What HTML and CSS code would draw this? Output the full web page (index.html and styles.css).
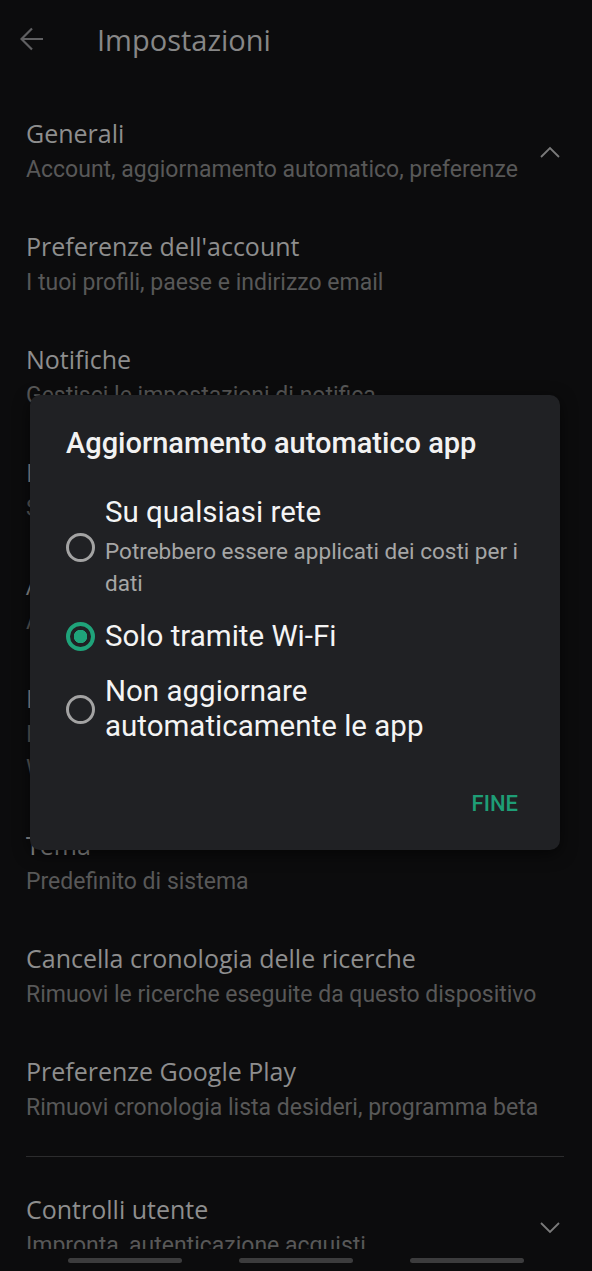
FILE: index.html
```html
<!DOCTYPE html>
<html lang="it">
<head>
<meta charset="utf-8">
<title>Impostazioni</title>
<link rel="stylesheet" href="styles.css">
</head>
<body>
<div class="screen">
  <header class="appbar">
    <svg class="back" width="24" height="24" viewBox="0 0 24 24"><path d="M23 12H2M12 1.5L1.5 12 12 22.5" fill="none" stroke="currentColor" stroke-width="2.2"/></svg>
    <h1 class="appbar-title">Impostazioni</h1>
  </header>
  <main class="content">
    <div class="item item-expand">
      <div class="item-text">
        <div class="item-title">Generali</div>
        <div class="item-sub">Account, aggiornamento automatico, preferenze</div>
      </div>
      <svg class="chev" width="20" height="12" viewBox="0 0 20 12"><polyline points="1,11 10,2 19,11" fill="none" stroke="currentColor" stroke-width="1.8"/></svg>
    </div>
    <div class="item">
      <div class="item-title">Preferenze dell'account</div>
      <div class="item-sub">I tuoi profili, paese e indirizzo email</div>
    </div>
    <div class="item">
      <div class="item-title">Notifiche</div>
      <div class="item-sub">Gestisci le impostazioni di notifica</div>
    </div>
    <div class="item">
      <div class="item-title">Impostazioni di download app</div>
      <div class="item-sub">Seleziona la tua preferenza</div>
    </div>
    <div class="item">
      <div class="item-title">Aggiornamento automatico app</div>
      <div class="item-sub">Aggiorna le app solo tramite Wi-Fi</div>
    </div>
    <div class="item">
      <div class="item-title">Icone dell'app</div>
      <div class="item-sub">Installa le icone delle nuove app<br>Wi-Fi</div>
    </div>
    <div class="item">
      <div class="item-title">Tema</div>
      <div class="item-sub">Predefinito di sistema</div>
    </div>
    <div class="item">
      <div class="item-title">Cancella cronologia delle ricerche</div>
      <div class="item-sub">Rimuovi le ricerche eseguite da questo dispositivo</div>
    </div>
    <div class="item">
      <div class="item-title">Preferenze Google Play</div>
      <div class="item-sub">Rimuovi cronologia lista desideri, programma beta</div>
    </div>
    <hr class="divider">
    <div class="item item-expand">
      <div class="item-text">
        <div class="item-title">Controlli utente</div>
        <div class="item-sub">Impronta, autenticazione acquisti</div>
      </div>
      <svg class="chev" width="20" height="12" viewBox="0 0 20 12"><polyline points="1,1 10,10 19,1" fill="none" stroke="currentColor" stroke-width="1.8"/></svg>
    </div>
  </main>
  <nav class="navbar">
    <span class="pill"></span>
    <span class="pill"></span>
    <span class="pill"></span>
  </nav>

  <div class="dialog" role="dialog">
    <h2 class="dialog-title">Aggiornamento automatico app</h2>
    <div class="options">
      <div class="option">
        <span class="radio"></span>
        <div class="option-text">
          <div class="option-title">Su qualsiasi rete</div>
          <div class="option-sub">Potrebbero essere applicati dei costi per i dati</div>
        </div>
      </div>
      <div class="option">
        <span class="radio checked"></span>
        <div class="option-text">
          <div class="option-title">Solo tramite Wi-Fi</div>
        </div>
      </div>
      <div class="option">
        <span class="radio"></span>
        <div class="option-text">
          <div class="option-title">Non aggiornare<br>automaticamente le app</div>
        </div>
      </div>
    </div>
    <div class="actions">
      <span class="btn">FINE</span>
    </div>
  </div>
</div>
</body>
</html>
```
FILE: styles.css
```css
* { box-sizing: border-box; }
html, body {
  margin: 0;
  padding: 0;
  background: #0c0c0d;
}
.screen {
  position: relative;
  width: 592px;
  height: 1271px;
  display: flex;
  flex-direction: column;
  overflow: hidden;
  background: #0c0c0d;
}
.appbar {
  height: 78px;
  flex: none;
  display: flex;
  align-items: center;
  padding-left: 20px;
}
.back {
  color: #606062;
  display: block;
}
.appbar-title {
  margin: 0 0 0 53px;
  font-family: "Open Sans", sans-serif;
  font-weight: 400;
  font-size: 29px;
  color: #878787;
  letter-spacing: 0;
}
.content {
  flex: 1;
  overflow: hidden;
  padding: 16px 28px 0 26px;
}
.item {
  padding: 22px 0 20px;
  white-space: nowrap;
}
.item-expand {
  display: flex;
  align-items: center;
  justify-content: space-between;
}
.item-title {
  font-family: "Open Sans", sans-serif;
  font-size: 25px;
  line-height: 34px;
  color: #8e8e8e;
}
.item-sub {
  font-family: Roboto, sans-serif;
  font-size: 23px;
  line-height: 34px;
  margin-top: 3px;
  color: #585858;
}
.chev {
  color: #7a7a7a;
  flex: none;
  margin-right: 4px;
}
.divider {
  border: 0;
  border-top: 1px solid #2c2c2d;
  margin: 11px 0 13px;
}
.navbar {
  height: 22px;
  flex: none;
  display: flex;
  justify-content: center;
  align-items: center;
  gap: 57px;
}
.pill {
  width: 114px;
  height: 5px;
  border-radius: 3px;
  background: #3c3c3d;
}

/* dialog */
.dialog {
  position: absolute;
  left: 30px;
  top: 395px;
  width: 530px;
  height: 455px;
  background: #202124;
  border-radius: 10px;
  box-shadow: 0 4px 16px rgba(0,0,0,0.6);
  padding: 32px 40px 0 36px;
  font-family: Roboto, sans-serif;
}
.dialog-title {
  margin: 0;
  font-size: 29px;
  font-weight: 500;
  line-height: 32px;
  color: #f2f2f2;
  white-space: nowrap;
}
.options {
  margin-top: 36px;
  display: flex;
  flex-direction: column;
  gap: 20px;
}
.option {
  display: flex;
  align-items: center;
  gap: 10px;
}
.option-title {
  font-size: 29.5px;
  line-height: 35px;
  color: #f4f4f4;
}
.option-sub {
  font-size: 22.5px;
  line-height: 32px;
  color: #a6a6a6;
  margin-top: 5px;
}
.radio {
  flex: none;
  width: 29px;
  height: 29px;
  border-radius: 50%;
  border: 3px solid #a3a3a3;
}
.radio.checked {
  border: 4px solid #1fa37a;
  background: radial-gradient(circle, #1fa37a 0 6.5px, transparent 7px);
}
.actions {
  display: flex;
  justify-content: flex-end;
  margin-top: 48px;
  padding-right: 2px;
}
.btn {
  font-size: 22px;
  font-weight: 500;
  line-height: 24px;
  color: #1e9e76;
}
```
